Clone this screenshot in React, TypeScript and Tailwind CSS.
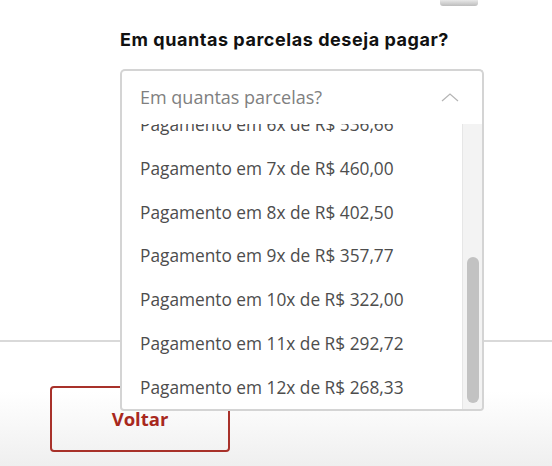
const parcelas = [
  "6x de R$ 536,66",
  "7x de R$ 460,00",
  "8x de R$ 402,50",
  "9x de R$ 357,77",
  "10x de R$ 322,00",
  "11x de R$ 292,72",
  "12x de R$ 268,33",
];

function ChevronUp() {
  return (
    <svg width="18" height="9" viewBox="0 0 18 9" fill="none">
      <polyline points="1,8 9,1 17,8" stroke="#b5b5b5" strokeWidth="1.2" />
    </svg>
  );
}

export default function App() {
  return (
    <div className="w-[552px] h-[466px] overflow-hidden flex flex-col bg-white font-['Open_Sans',sans-serif]">
      {/* top section */}
      <div className="relative h-[340px] shrink-0 pl-[120px]">
        <div className="absolute right-[74px] top-0 w-[38px] h-[6px] rounded-b-[3px] bg-gradient-to-b from-[#e8e8e8] to-[#bdbdbd]" />

        <h2 className="pt-[27px] text-[18px] leading-[26px] font-bold text-[#111] font-['Inter',sans-serif] tracking-[0.55px]">
          Em quantas parcelas deseja pagar?
        </h2>

        {/* select (open) */}
        <div className="relative z-10 mt-[16px] w-[364px]">
          <div className="h-[55px] flex items-center justify-between pl-[18px] pr-[23px] border-2 border-b-0 border-[#d4d4d4] rounded-t-[5px] bg-white">
            <span className="text-[18px] text-[#808080]">Em quantas parcelas?</span>
            <ChevronUp />
          </div>
          <div className="absolute left-0 top-full w-full h-[287px] flex border-2 border-t-0 border-[#d4d4d4] rounded-b-[4px] bg-white overflow-hidden">
            <div className="flex-1 overflow-hidden">
              <ul className="-mt-[21px]">
                {parcelas.map((p) => (
                  <li
                    key={p}
                    className="h-[43.8px] flex items-center pl-[18px] text-[17.3px] text-[#4d4d4d]"
                  >
                    Pagamento em {p}
                  </li>
                ))}
              </ul>
            </div>
            <div className="w-[20px] shrink-0 bg-[#f3f3f3] border-l border-[#e6e6e6] flex flex-col justify-end items-center pb-[6px]">
              <div className="w-[12px] h-[146px] rounded-full bg-[#c2c2c2]" />
            </div>
          </div>
        </div>
      </div>

      {/* footer */}
      <div className="flex-1 border-t-2 border-[#d9d9d9] bg-gradient-to-b from-white from-40% to-[#efefef] pl-[50px] pt-[44px]">
        <button className="w-[180px] h-[66px] border-2 border-[#a8312a] rounded-[4px] text-[#a8281d] text-[18.5px] font-bold">
          Voltar
        </button>
      </div>
    </div>
  );
}
